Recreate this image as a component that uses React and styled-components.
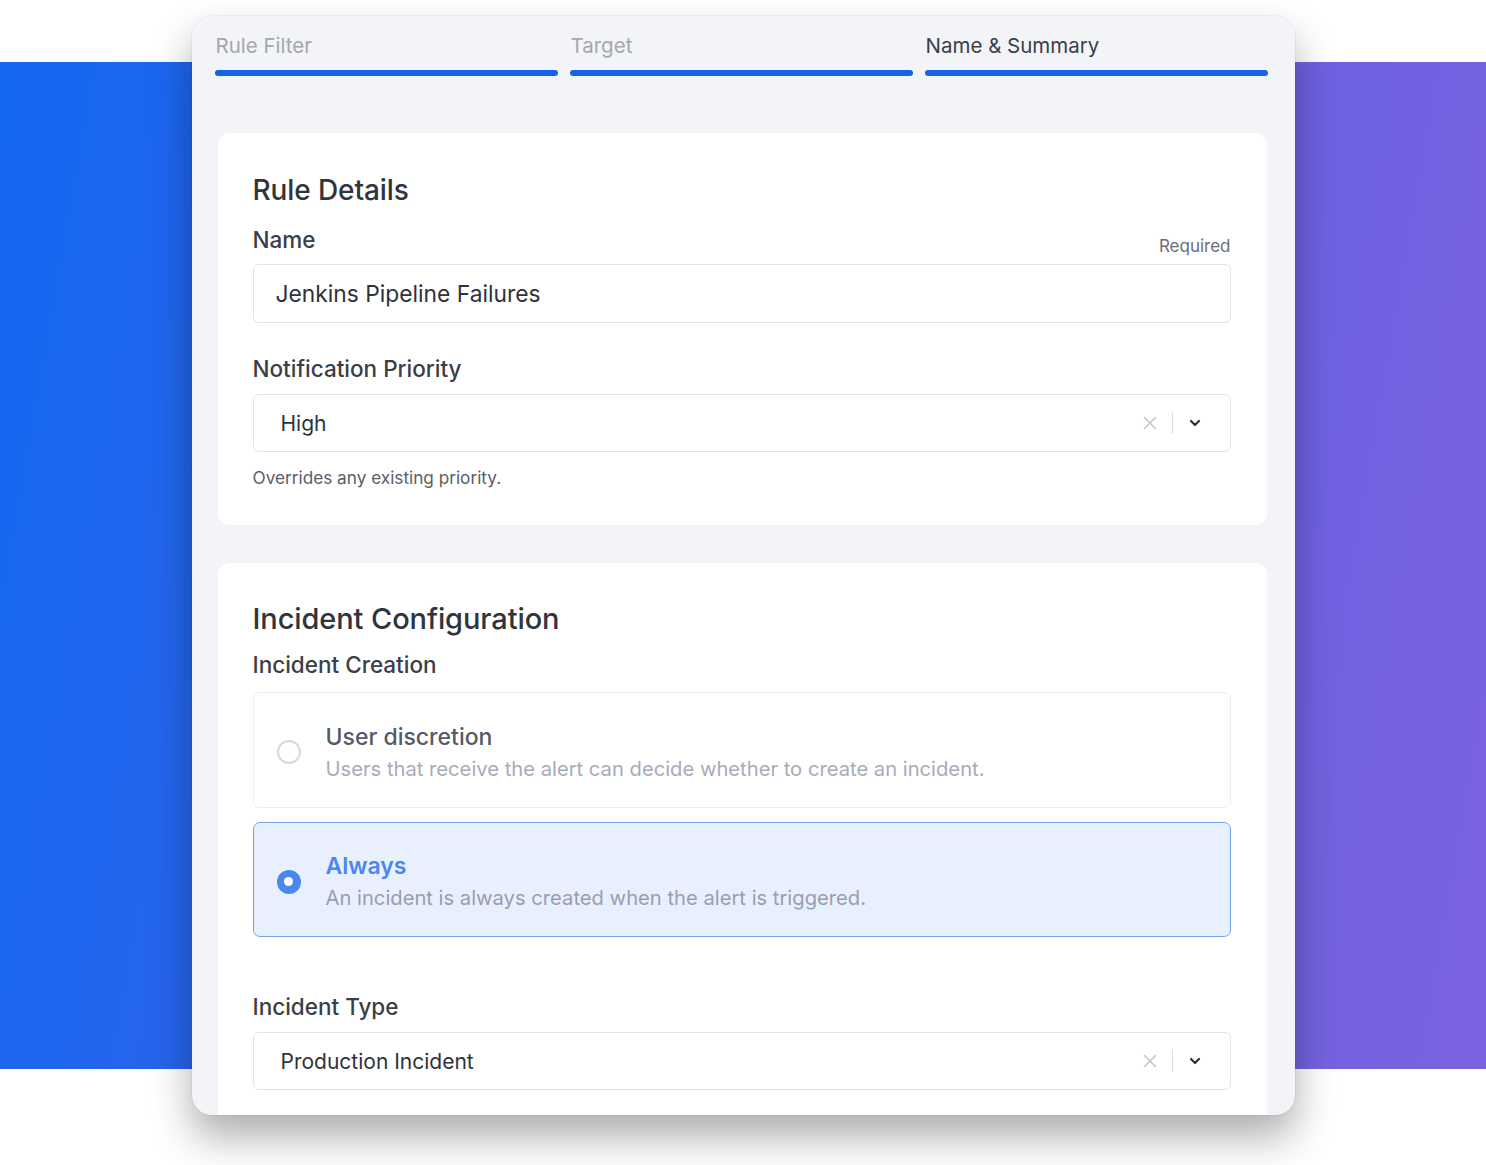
import React from "react";
import styled, { createGlobalStyle } from "styled-components";

const GlobalStyle = createGlobalStyle`
  * { box-sizing: border-box; }
  body {
    margin: 0;
    background: #ffffff;
    font-family: "Inter", "Noto Sans", sans-serif;
    -webkit-font-smoothing: antialiased;
  }
`;

const Stage = styled.div`
  width: 100%;
  height: 1165px;
  padding-top: 16px;
  background-color: #ffffff;
  background-image: linear-gradient(100deg, #1467f1 0%, #3563e8 38%, #6762e2 72%, #7c62e0 100%);
  background-size: 100% 1007px;
  background-position: 0 62px;
  background-repeat: no-repeat;
  overflow: hidden;
`;

const Card = styled.div`
  width: 1103px;
  height: 1099px;
  margin: 0 auto;
  padding: 16px 27px 0 24px;
  background: #f3f4f7;
  border-radius: 20px;
  overflow: hidden;
  box-shadow: 0 22px 40px rgba(0, 0, 0, 0.32), 0 0 0 1px rgba(0, 0, 0, 0.04);
`;

const Steps = styled.div`
  display: grid;
  grid-template-columns: repeat(3, 1fr);
  gap: 12px;
  margin-left: -1px;
`;

const Step = styled.div`
  display: flex;
  flex-direction: column;
`;

const StepLabel = styled.span`
  font-size: 20.5px;
  line-height: 28px;
  color: ${(p) => (p.active ? "#3b3f49" : "#a5a7ae")};
  padding-left: 1px;
`;

const StepBar = styled.div`
  margin-top: 10px;
  height: 6px;
  border-radius: 3px;
  background: #1463ea;
`;

const Panel = styled.section`
  margin-top: ${(p) => p.gap}px;
  margin-left: 2px;
  margin-right: 1px;
  background: #ffffff;
  border-radius: 12px;
  padding: ${(p) => p.pad};
`;

const Title = styled.h2`
  margin: 0;
  font-size: ${(p) => p.size}px;
  line-height: 38px;
  font-weight: 500;
  color: #30343d;
  letter-spacing: -0.1px;
`;

const LabelRow = styled.div`
  display: flex;
  justify-content: space-between;
  align-items: flex-end;
  margin-top: ${(p) => p.gap}px;
`;

const Label = styled.span`
  font-size: 22.5px;
  line-height: 28px;
  font-weight: 500;
  color: #3a3e47;
`;

const Required = styled.span`
  font-size: 17px;
  line-height: 22px;
  margin-bottom: -3px;
  color: #6b6e77;
`;

const Field = styled.div`
  margin-top: ${(p) => p.gap}px;
  height: ${(p) => p.h}px;
  border: 1px solid #e3e4e8;
  border-radius: 6px;
  display: flex;
  align-items: center;
  padding-left: ${(p) => p.indent}px;
  padding-right: 29px;
  font-size: ${(p) => p.fs}px;
  color: #2e323b;
`;

const Value = styled.span`
  flex: 1;
`;

const Controls = styled.div`
  display: flex;
  align-items: center;
`;

const Divider = styled.span`
  width: 1px;
  height: 22px;
  background: #dcdde3;
  margin: 0 16px 0 15px;
`;

const Helper = styled.p`
  margin: 14px 0 0;
  font-size: 17.2px;
  line-height: 24px;
  color: #5a5d66;
`;

const Options = styled.div`
  margin-top: 13px;
  display: flex;
  flex-direction: column;
  gap: 14px;
`;

const Option = styled.div`
  height: ${(p) => p.h}px;
  display: flex;
  align-items: center;
  gap: 25px;
  padding: 4px 0 0 23px;
  border-radius: 7px;
  border: 1px solid ${(p) => (p.selected ? "#74a3f0" : "#eceef1")};
  background: ${(p) => (p.selected ? "#e9f0fd" : "#ffffff")};
`;

const Radio = styled.span`
  width: 24px;
  height: 24px;
  border-radius: 50%;
  flex-shrink: 0;
  display: flex;
  align-items: center;
  justify-content: center;
  border: ${(p) => (p.checked ? "none" : "2px solid #d8d9dd")};
  background: ${(p) => (p.checked ? "#4a87ef" : "transparent")};
  &::after {
    content: "";
    display: ${(p) => (p.checked ? "block" : "none")};
    width: 9px;
    height: 9px;
    border-radius: 50%;
    background: #ffffff;
  }
`;

const OptionText = styled.div`
  display: flex;
  flex-direction: column;
`;

const OptionTitle = styled.span`
  font-size: 23px;
  line-height: 30px;
  font-weight: ${(p) => (p.selected ? 600 : 500)};
  color: ${(p) => (p.selected ? "#4a87ef" : "#565a66")};
`;

const OptionDesc = styled.span`
  margin-top: 3px;
  font-size: 20.2px;
  line-height: 28px;
  color: ${(p) => (p.selected ? "#9a9db0" : "#a8abbb")};
`;

const Clear = () => (
  <svg width="14" height="14" viewBox="0 0 14 14" fill="none">
    <path d="M1.5 1.5l11 11M12.5 1.5l-11 11" stroke="#c3c5ce" strokeWidth="1.6" strokeLinecap="round" />
  </svg>
);

const Chevron = () => (
  <svg width="12" height="8" viewBox="0 0 12 8" fill="none">
    <path d="M2 2l4 4 4-4" stroke="#2e323b" strokeWidth="2.2" strokeLinecap="round" strokeLinejoin="round" />
  </svg>
);

const Select = ({ value, gap }) => (
  <Field gap={gap} h={58} indent={27} fs={21}>
    <Value>{value}</Value>
    <Controls>
      <Clear />
      <Divider />
      <Chevron />
    </Controls>
  </Field>
);

const steps = [
  { label: "Rule Filter" },
  { label: "Target" },
  { label: "Name & Summary", active: true },
];

export default function App() {
  return (
    <Stage>
      <GlobalStyle />
      <Card>
        <Steps>
          {steps.map((s) => (
            <Step key={s.label}>
              <StepLabel active={s.active}>{s.label}</StepLabel>
              <StepBar />
            </Step>
          ))}
        </Steps>

        <Panel gap={57} pad="38px 36px 35px 35px">
          <Title size={28}>Rule Details</Title>
          <LabelRow gap={17}>
            <Label>Name</Label>
            <Required>Required</Required>
          </LabelRow>
          <Field gap={10} h={59} indent={22} fs={22.8}>
            <Value>Jenkins Pipeline Failures</Value>
          </Field>
          <LabelRow gap={32}>
            <Label>Notification Priority</Label>
          </LabelRow>
          <Select value="High" gap={11} />
          <Helper>Overrides any existing priority.</Helper>
        </Panel>

        <Panel gap={38} pad="37px 36px 40px 35px">
          <Title size={29}>Incident Configuration</Title>
          <LabelRow gap={13}>
            <Label>Incident Creation</Label>
          </LabelRow>
          <Options>
            <Option h={116}>
              <Radio />
              <OptionText>
                <OptionTitle>User discretion</OptionTitle>
                <OptionDesc>Users that receive the alert can decide whether to create an incident.</OptionDesc>
              </OptionText>
            </Option>
            <Option h={115} selected>
              <Radio checked />
              <OptionText>
                <OptionTitle selected>Always</OptionTitle>
                <OptionDesc selected>An incident is always created when the alert is triggered.</OptionDesc>
              </OptionText>
            </Option>
          </Options>
          <LabelRow gap={56}>
            <Label>Incident Type</Label>
          </LabelRow>
          <Select value="Production Incident" gap={11} />
        </Panel>
      </Card>
    </Stage>
  );
}
